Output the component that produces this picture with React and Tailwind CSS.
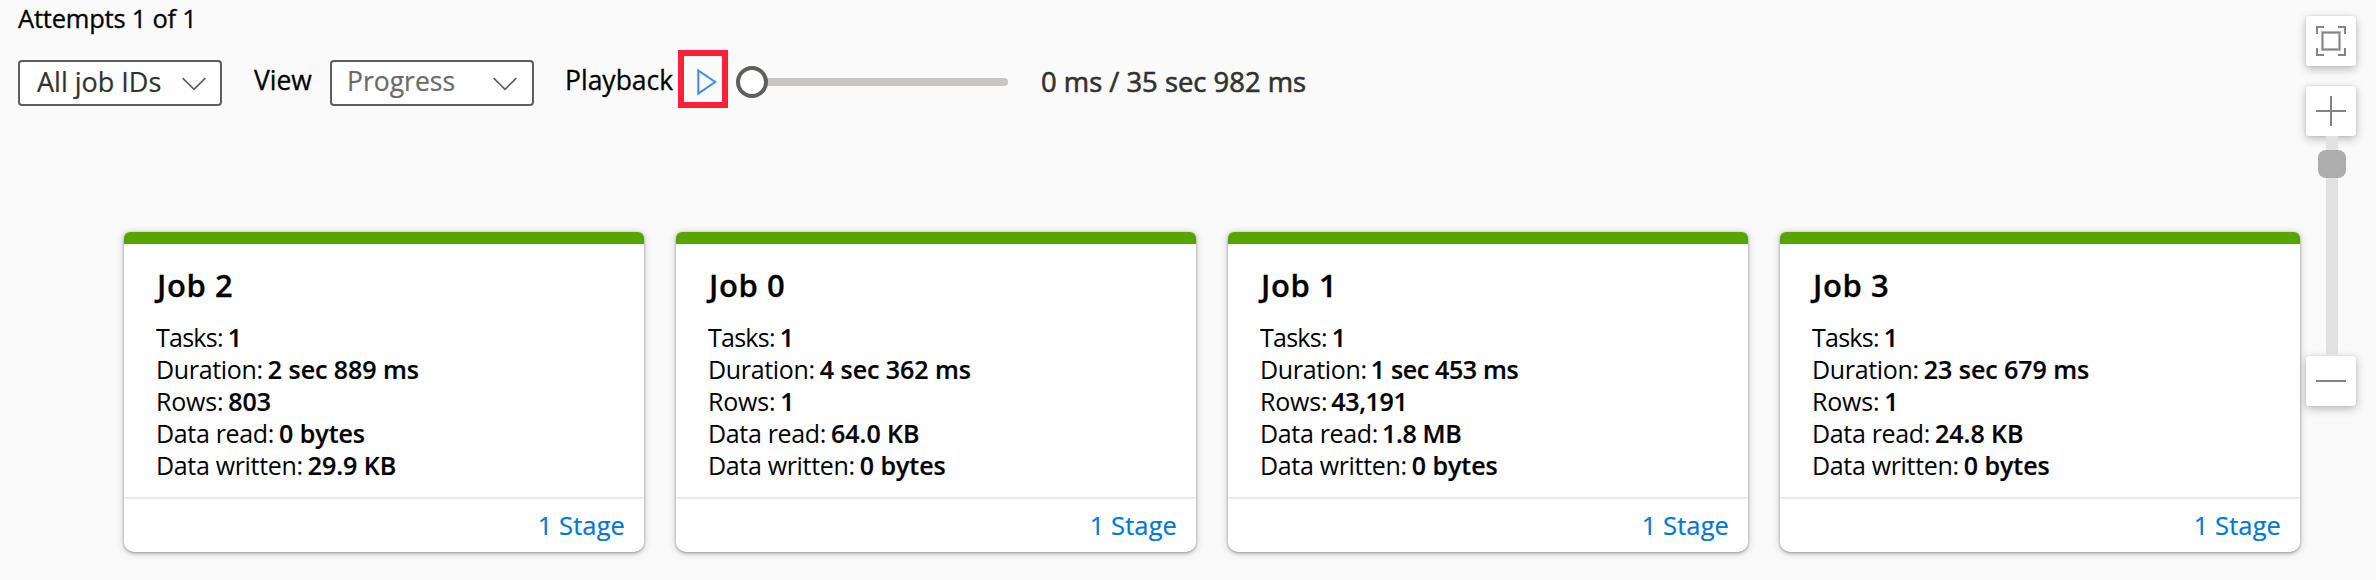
const jobs = [
  { id: 2, tasks: "1", duration: "2 sec 889 ms", rows: "803", read: "0 bytes", written: "29.9 KB" },
  { id: 0, tasks: "1", duration: "4 sec 362 ms", rows: "1", read: "64.0 KB", written: "0 bytes" },
  { id: 1, tasks: "1", duration: "1 sec 453 ms", rows: "43,191", read: "1.8 MB", written: "0 bytes" },
  { id: 3, tasks: "1", duration: "23 sec 679 ms", rows: "1", read: "24.8 KB", written: "0 bytes" },
];

function Stat({ label, value, labelClass = "mr-[5px] tracking-[-0.33px]" }) {
  const startsNarrow = value.startsWith("1 ") || value.startsWith("1.") || value.includes(",");
  return (
    <div className="flex h-8 text-[25px] leading-8 whitespace-nowrap">
      <dt className={labelClass}>{label}:</dt>
      <dd className={`font-semibold [-webkit-text-stroke:0.2px] ${startsNarrow ? "-ml-px tracking-[-0.35px]" : "tracking-[-0.04px]"}`}>{value}</dd>
    </div>
  );
}

function JobCard({ job }) {
  return (
    <article className="flex h-80 w-[520px] flex-col overflow-hidden rounded-t-[6px] rounded-b-[10px] bg-white shadow-[0_1px_3px_rgba(0,0,0,0.34),0_1px_9px_rgba(0,0,0,0.2)]">
      <div className="h-3 shrink-0 bg-[#57a300]" />
      <div className="h-[253px] pt-[21px] pl-8">
        <h2 className="ml-px text-[31px] leading-10 font-semibold tracking-[0.6px] [-webkit-text-stroke:0.3px]">Job {job.id}</h2>
        <dl className="mt-4">
          <Stat label="Tasks" value={job.tasks} labelClass="mr-[5px] tracking-[-0.75px]" />
          <Stat label="Duration" value={job.duration} />
          <Stat label="Rows" value={job.rows} labelClass="mr-[5px] tracking-[-0.22px]" />
          <Stat label="Data read" value={job.read} />
          <Stat label="Data written" value={job.written} />
        </dl>
      </div>
      <div className="flex flex-1 justify-end border-t-2 border-[#eaeaea] pr-[19px]">
        <a className="mt-[6px] text-[25.5px] leading-[40px] tracking-[0.1px] text-[#0078d4] [-webkit-text-stroke:0.2px]">1 Stage</a>
      </div>
    </article>
  );
}

function Chevron() {
  return (
    <svg className="mt-[2px] h-[14px] w-6" viewBox="0 0 24 14" fill="none" stroke="#605e5c" strokeWidth="1.7">
      <path d="M0.7 1.2 12 12.3 23.3 1.2" />
    </svg>
  );
}

function Dropdown({ value, className }) {
  return (
    <div className={`mt-[10px] flex h-[46px] w-[204px] shrink-0 items-center justify-between rounded-[4px] border-2 border-[#605e5c] bg-white ${className}`}>
      <span className="h-[42px] leading-[39px] whitespace-nowrap">{value}</span>
      <Chevron />
    </div>
  );
}

function ToolButton({ children }) {
  return (
    <button className="size-[50px] shrink-0 rounded-[3px] bg-white shadow-[0_3px_10px_rgba(0,0,0,0.26),0_0_3px_rgba(0,0,0,0.1)]">
      <svg className="size-[50px]" viewBox="0 0 50 50" fill="none" stroke="#858483" strokeWidth="2">
        {children}
      </svg>
    </button>
  );
}

export default function App() {
  return (
    <div className="flex h-[580px] w-[2376px] overflow-hidden bg-[#fafafa] font-['Open_Sans','Noto_Sans',sans-serif] text-black">
      <main className="w-[2306px] shrink-0">
        <div className="ml-[18px] text-[25.5px] leading-9 tracking-[-0.22px] [-webkit-text-stroke:0.3px]">Attempts 1 of 1</div>

        <div className="mt-[14px] ml-[18px] flex h-[58px] whitespace-nowrap">
          <Dropdown value="All job IDs" className="pr-[14px] pl-[17px] text-[27px] text-[#323130] [-webkit-text-stroke:0.2px]" />
          <span className="ml-[32px] w-[76px] text-[26.5px] leading-[60px] [-webkit-text-stroke:0.3px]">View</span>
          <Dropdown value="Progress" className="pr-[15px] pl-[15px] text-[26.5px] text-[#6b6a69] [-webkit-text-stroke:0.2px]" />
          <span className="ml-[31px] w-[113px] text-[26.5px] leading-[60px] [-webkit-text-stroke:0.3px]">Playback</span>
          <button className="h-[58px] w-[50px] border-[6px] border-[#ff2036]">
            <svg className="h-[46px] w-[38px]" viewBox="0 0 38 46" fill="none" stroke="#3f88ea" strokeWidth="2">
              <path d="M14.3 14.5 31.2 26 14.3 37.5Z" />
            </svg>
          </button>
          <div className="relative ml-2 flex w-[272px] items-center pt-[6px]">
            <div className="ml-4 h-2 flex-1 rounded-r-full bg-[#c8c6c4]" />
            <div className="absolute top-4 left-0 size-8 rounded-full border-4 border-[#605e5c] bg-white" />
          </div>
          <span className="ml-[33px] text-[27.4px] leading-[63px] text-[#323130] [-webkit-text-stroke:0.6px]">0 ms / 35 sec 982 ms</span>
        </div>

        <section className="mt-[124px] ml-[124px] flex gap-8">
          {jobs.map((job) => (
            <JobCard key={job.id} job={job} />
          ))}
        </section>
      </main>

      <aside className="flex w-[50px] shrink-0 flex-col pt-4">
        <ToolButton>
          <path d="M11 18v-7h7M32 11h7v7M39 32v7h-7M18 39h-7v-7" />
          <path d="M16.5 16.5h17v17h-17z" stroke="#c8c6c4" strokeWidth="3" />
          <path d="M16.5 16.5h17v17h-17z" stroke="#858483" strokeWidth="1.4" />
        </ToolButton>
        <div className="mt-5 flex flex-col">
          <ToolButton>
            <path d="M25 10v30M10 25h30" />
          </ToolButton>
          <div className="relative ml-5 h-[220px] w-3 bg-[#e1e1e1]">
            <div className="absolute top-[14px] -left-2 size-7 rounded-lg bg-[#adadad]" />
          </div>
          <ToolButton>
            <path d="M10 25h30" />
          </ToolButton>
        </div>
      </aside>
    </div>
  );
}
